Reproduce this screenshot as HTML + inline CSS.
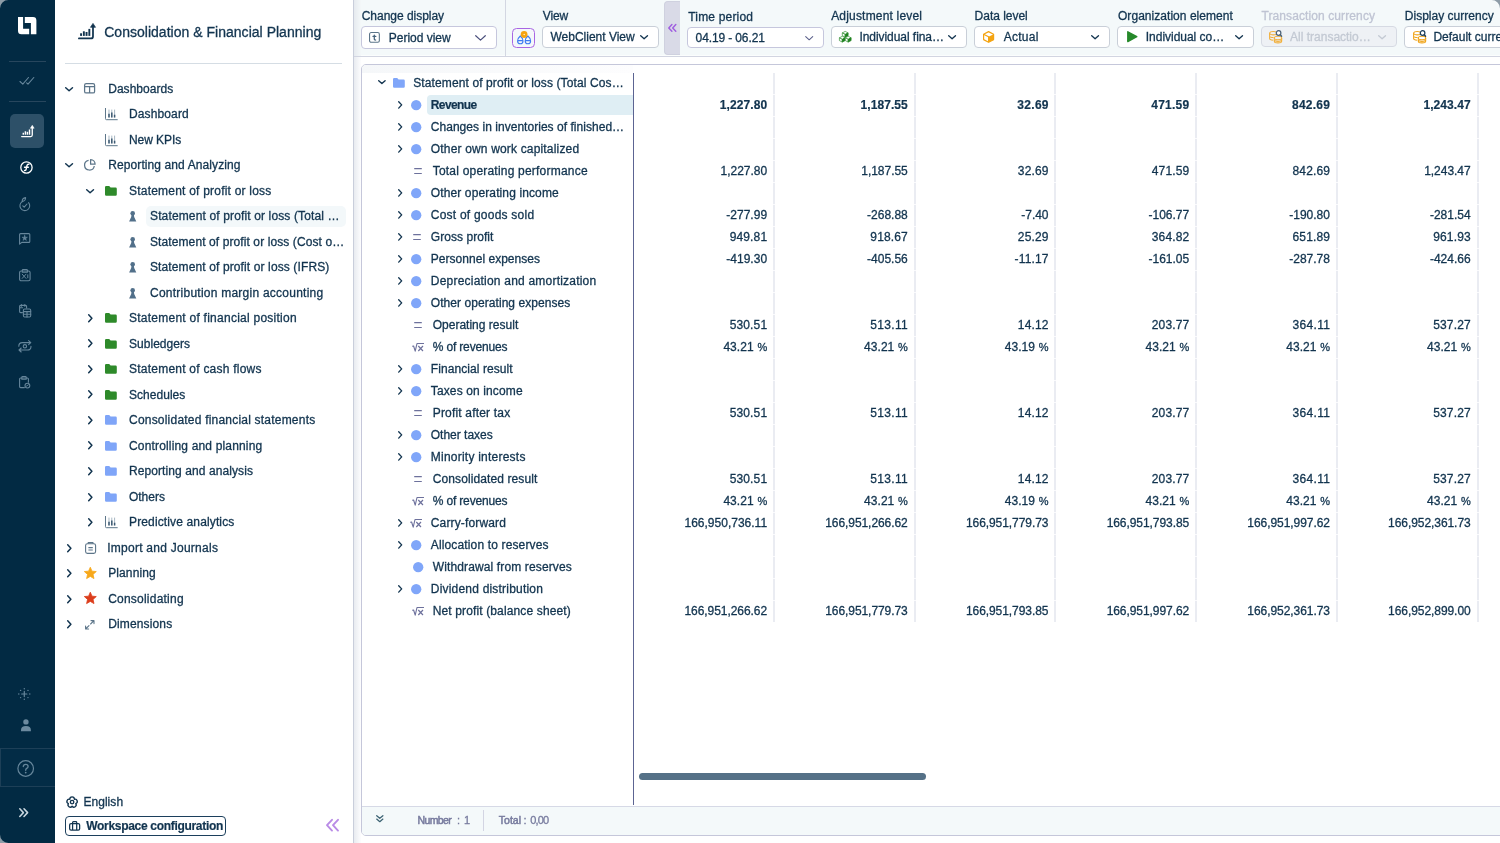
<!DOCTYPE html>
<html lang="en"><head><meta charset="utf-8"><title>Consolidation &amp; Financial Planning</title>
<style>
html,body{margin:0;padding:0}
body{width:1500px;height:843px;overflow:hidden;position:relative;background:#f4f9fa;font-family:"Liberation Sans", sans-serif;color:#12344f}
#root{position:absolute;left:0;top:0;width:1500px;height:843px;overflow:hidden;will-change:transform}
#root div,#root svg,#root span.t{position:absolute}
#root div{box-sizing:border-box}
span.t{white-space:nowrap;line-height:1;font-size:12px;-webkit-text-stroke:0.3px currentColor}
svg{overflow:visible}
</style></head><body><div id="root">
<div style="left:55px;top:0px;width:298px;height:843px;background:#fff"></div>
<div style="left:353px;top:0px;width:1px;height:843px;background:#c9cedb"></div>
<div style="left:354px;top:0px;width:7px;height:843px;background:linear-gradient(90deg,#e6eaef,#f4f8f9)"></div>
<aside class="app-sidebar" aria-label="Modules">
<div style="left:0px;top:0px;width:55px;height:843px;background:#022a43"></div>
<svg style="left:17.8px;top:16.8px" width="18.4" height="17.3" viewBox="0 0 18.4 17.3" ><path fill="#fff" d="M0,0H5.1V11.8H11.2V17.3H3.5Q0,17.3 0,13.8Z"/><path fill="#fff" d="M6.8,0H15Q18.4,0 18.4,3.4V17.3H12.9V5.9H6.8Z"/></svg>
<div style="left:9px;top:61px;width:37px;height:1px;background:#27465d"></div>
<div style="left:9px;top:101px;width:37px;height:1px;background:#27465d"></div>
<svg style="left:19px;top:76px" width="16" height="10" viewBox="0 0 16 10" ><path d="M1,5.5 L3.8,8.2 L9.5,1.5 M7.6,6.8 L9,8.2 L14.8,1.5" fill="none" stroke="#66869b" stroke-width="1.1" stroke-linecap="round" stroke-linejoin="round"/></svg>
<div style="left:10.3px;top:114px;width:34.2px;height:34.2px;background:#2d5068;border-radius:5px"></div>
<svg style="left:21px;top:124.5px" width="13.3" height="12.3" viewBox="0 0 17.7 16.3" ><path d="M0.9,15.4 H13 Q15,15.4 15,13.4 V4.6" fill="none" stroke="#fff" stroke-width="1.75" stroke-linecap="round"/><path d="M15,0.4 L17.5,4.3 H12.5 Z" fill="#fff" stroke="#fff" stroke-width="0.7" stroke-linejoin="round"/><rect x="2.1" y="10.3" width="1.9" height="2.6" fill="#fff"/><rect x="4.9" y="8.3" width="1.9" height="4.6" fill="#fff"/><rect x="7.6" y="9" width="1.9" height="3.9" fill="#fff"/><rect x="10.4" y="5.9" width="1.9" height="7" fill="#fff"/></svg>
<svg style="left:20.1px;top:161.1px" width="12.9" height="12.9" viewBox="0 0 13 13" ><circle cx="6.5" cy="6.5" r="5.7" fill="none" stroke="#fff" stroke-width="1.3"/><path d="M4.6,9.6 Q5.9,9.9 6.2,8.2 L7,4.6 Q7.4,3 8.9,3.3 M4.6,6.3 H8.4" fill="none" stroke="#fff" stroke-width="1.4" stroke-linecap="round"/></svg>
<svg style="left:19px;top:196.5px" width="11.2" height="14.2" viewBox="0 0 11.2 14.2" ><g fill="none" stroke="#66869b" stroke-width="1.1" stroke-linecap="round" stroke-linejoin="round"><path d="M9.6,5.6 A4.9,4.9 0 1 1 3.2,4.6"/><path d="M3.2,4.6 Q3,1.2 6.6,0.6 Q6.8,3.6 3.6,4.4"/><path d="M3.8,8.8 L5.2,10.2 L8,7"/></g></svg>
<svg style="left:19px;top:232.9px" width="11.4" height="12" viewBox="0 0 11.4 12" ><g fill="none" stroke="#66869b" stroke-width="1.1" stroke-linecap="round" stroke-linejoin="round"><path d="M0.6,11.2 V1.6 Q0.6,0.6 1.6,0.6 H9.8 Q10.8,0.6 10.8,1.6 V8.4 Q10.8,9.4 9.8,9.4 H2.8 Z"/><polygon points="5.70,2.20 6.38,4.17 8.46,4.20 6.79,5.46 7.40,7.45 5.70,6.25 4.00,7.45 4.61,5.46 2.94,4.20 5.02,4.17" fill="#66869b" stroke-width="0.5"/></g></svg>
<svg style="left:19.2px;top:269.4px" width="11.7" height="12.4" viewBox="0 0 11.7 12.4" ><g fill="none" stroke="#66869b" stroke-width="1.1" stroke-linecap="round" stroke-linejoin="round"><rect x="0.6" y="2" width="10.5" height="9.8" rx="1.6"/><path d="M3.3,3.3 V1.3 Q3.3,0.5 4.1,0.5 H7.6 Q8.4,0.5 8.4,1.3 V3.3 Z"/><path d="M3.2,5.2 L7,9.4 M7,5.2 L3.2,9.4 M8.8,5.8 V8.8" stroke-width="1"/></g></svg>
<svg style="left:18.6px;top:303.8px" width="12.3" height="13.6" viewBox="0 0 12.3 13.6" ><g fill="none" stroke="#66869b" stroke-width="1.1" stroke-linecap="round" stroke-linejoin="round"><path d="M3.4,8.6 H1.6 Q0.6,8.6 0.6,7.6 V2.4 Q0.6,1.4 1.6,1.4 H6.6 Q7.6,1.4 7.6,2.4 V4 M2.4,0.5 V2.2 M5.8,0.5 V2.2 M0.6,3.8 H3.6"/><rect x="4.4" y="5" width="7.3" height="8" rx="1.2"/><path d="M4.4,7.6 H11.7 M4.4,10.2 H11.7 M8,7.6 V13"/></g></svg>
<svg style="left:18.2px;top:340.3px" width="13.8" height="12.6" viewBox="0 0 13.8 12.6" ><g fill="none" stroke="#66869b" stroke-width="1.1" stroke-linecap="round" stroke-linejoin="round"><path d="M0.8,6.2 Q0.8,2.6 4.4,2.6 H12.6 M10.6,0.6 L12.8,2.6 L10.6,4.6"/><path d="M13,6.4 Q13,10 9.4,10 H1.2 M3.2,8 L1,10 L3.2,12"/><circle cx="6.9" cy="6.3" r="1.7"/></g></svg>
<svg style="left:19.4px;top:375.8px" width="11.4" height="12.4" viewBox="0 0 11.4 12.4" ><g fill="none" stroke="#66869b" stroke-width="1.1" stroke-linecap="round" stroke-linejoin="round"><path d="M5.4,11.6 H1.6 Q0.6,11.6 0.6,10.6 V3 Q0.6,2 1.6,2 H8.4 Q9.4,2 9.4,3 V6.2"/><path d="M2.8,3.3 V1.3 Q2.8,0.5 3.6,0.5 H6.4 Q7.2,0.5 7.2,1.3 V3.3 Z"/><circle cx="8.4" cy="9.6" r="2.4"/><path d="M7.4,10.2 L9.4,8.8" stroke-width="0.9"/></g></svg>
<svg style="left:18.4px;top:687.7px" width="12.6" height="12" viewBox="0 0 12.6 12" ><g fill="#66869b"><path d="M6.3,3.4 V8.6 M3.7,6 H8.9" stroke="#66869b" stroke-width="1.2" stroke-linecap="round"/><circle cx="6.3" cy="0.8" r="0.7"/><circle cx="6.3" cy="11.2" r="0.7"/><circle cx="0.8" cy="6" r="0.7"/><circle cx="11.8" cy="6" r="0.7"/><circle cx="2.6" cy="2.4" r="0.7"/><circle cx="10" cy="2.4" r="0.7"/><circle cx="2.6" cy="9.6" r="0.7"/><circle cx="10" cy="9.6" r="0.7"/></g></svg>
<svg style="left:20.7px;top:718.7px" width="9.9" height="12.2" viewBox="0 0 9.9 12.2" ><circle cx="4.95" cy="2.9" r="2.7" fill="#6c8a9f"/><path d="M0,12.2 V11 Q0,6.9 4.95,6.9 Q9.9,6.9 9.9,11 V12.2 Z" fill="#6c8a9f"/></svg>
<div style="left:0px;top:748px;width:55px;height:38.5px;border-top:1px solid #1d3f57;border-bottom:1px solid #1d3f57;border-left:1px solid #1d3f57;background:#032c46"></div>
<svg style="left:17px;top:759.7px" width="17.4" height="17" viewBox="0 0 17.4 17" ><circle cx="8.7" cy="8.5" r="7.8" fill="none" stroke="#66869b" stroke-width="1.2"/><path d="M6.3,6.6 Q6.3,4.3 8.7,4.3 Q11.1,4.3 11.1,6.4 Q11.1,7.7 9.7,8.4 Q8.7,9 8.7,10.3" fill="none" stroke="#66869b" stroke-width="1.3" stroke-linecap="round"/><circle cx="8.7" cy="12.6" r="0.9" fill="#66869b"/></svg>
<svg style="left:19.3px;top:808px" width="9.2" height="9.3" viewBox="0 0 9.2 9.3" ><path d="M0.8,0.8 L4.4,4.65 L0.8,8.5 M5,0.8 L8.6,4.65 L5,8.5" fill="none" stroke="#c9d6df" stroke-width="1.55" stroke-linecap="round" stroke-linejoin="round"/></svg>
</aside>
<nav class="nav-panel" aria-label="Consolidation and Financial Planning">
<svg style="left:77.8px;top:23.2px" width="17.7" height="16.3" viewBox="0 0 17.7 16.3" ><path d="M0.9,15.4 H13 Q15,15.4 15,13.4 V4.6" fill="none" stroke="#12344f" stroke-width="1.75" stroke-linecap="round"/><path d="M15,0.4 L17.5,4.3 H12.5 Z" fill="#12344f" stroke="#12344f" stroke-width="0.7" stroke-linejoin="round"/><rect x="2.1" y="10.3" width="1.9" height="2.6" fill="#12344f"/><rect x="4.9" y="8.3" width="1.9" height="4.6" fill="#12344f"/><rect x="7.6" y="9" width="1.9" height="3.9" fill="#12344f"/><rect x="10.4" y="5.9" width="1.9" height="7" fill="#12344f"/></svg>
<span id="t0" class="t" style="left:104.20px;top:25px;font-size:14px;letter-spacing:0.022px;">Consolidation &amp; Financial Planning</span>
<div style="left:65px;top:63px;width:277px;height:1px;background:#d5dde4"></div>
<div style="left:146px;top:205.6px;width:200px;height:21.2px;background:#f3f8fa;border-radius:5px"></div>
<svg style="left:64.9px;top:86.55px" width="8.2" height="4.4" viewBox="0 0 8.2 4.4" ><path d="M0.7,0.7 L4.1,3.7 L7.5,0.7" fill="none" stroke="#12344f" stroke-width="1.5" stroke-linecap="round" stroke-linejoin="round"/></svg>
<svg style="left:84.4px;top:83.35px" width="11.2" height="10.6" viewBox="0 0 11.2 10.6" ><g fill="none" stroke="#5c7589" stroke-width="1.25"><rect x="0.6" y="0.6" width="10" height="9.4" rx="1.6"/><path d="M0.6,3.6 H10.6 M5.6,3.6 V10"/></g></svg>
<span id="t1" class="t" style="left:108.20px;top:83px;letter-spacing:0.033px;">Dashboards</span>
<svg style="left:104.9px;top:108.26px" width="12.7" height="12.2" viewBox="0 0 12.7 12.2" ><path d="M0.5,0 V10.7 Q0.5,11.7 1.5,11.7 H12.7" fill="none" stroke="#5c7589" stroke-width="1"/><g stroke="#9fb0bd" stroke-width="0.9"><path d="M4,1.6 V9.4 M6.8,1.6 V9.4 M9.6,1.6 V9.4"/></g><g stroke="#3d5a72" stroke-width="1.5"><path d="M4,5.8 V9.4 M6.8,4.4 V9.4 M9.6,6.8 V9.4"/></g></svg>
<span id="t2" class="t" style="left:129.00px;top:108px;letter-spacing:0.121px;">Dashboard</span>
<svg style="left:104.9px;top:133.77px" width="12.7" height="12.2" viewBox="0 0 12.7 12.2" ><path d="M0.5,0 V10.7 Q0.5,11.7 1.5,11.7 H12.7" fill="none" stroke="#5c7589" stroke-width="1"/><g stroke="#9fb0bd" stroke-width="0.9"><path d="M4,1.6 V9.4 M6.8,1.6 V9.4 M9.6,1.6 V9.4"/></g><g stroke="#3d5a72" stroke-width="1.5"><path d="M4,5.8 V9.4 M6.8,4.4 V9.4 M9.6,6.8 V9.4"/></g></svg>
<span id="t3" class="t" style="left:129.00px;top:134px;letter-spacing:-0.055px;">New KPIs</span>
<svg style="left:64.9px;top:163.08px" width="8.2" height="4.4" viewBox="0 0 8.2 4.4" ><path d="M0.7,0.7 L4.1,3.7 L7.5,0.7" fill="none" stroke="#12344f" stroke-width="1.5" stroke-linecap="round" stroke-linejoin="round"/></svg>
<svg style="left:84.2px;top:159.48px" width="11.7" height="11.4" viewBox="0 0 11.7 11.4" ><g fill="none" stroke="#5c7589" stroke-width="1.25"><path d="M4.6,1.3 A4.9,4.9 0 1 0 10.3,7"/><path d="M6.6,0.6 V5.2 H11.1 A4.6,4.6 0 0 0 6.6,0.6 Z" stroke-linejoin="round"/></g></svg>
<span id="t4" class="t" style="left:108.20px;top:159px;letter-spacing:0.101px;">Reporting and Analyzing</span>
<svg style="left:85.9px;top:188.59px" width="8.2" height="4.4" viewBox="0 0 8.2 4.4" ><path d="M0.7,0.7 L4.1,3.7 L7.5,0.7" fill="none" stroke="#12344f" stroke-width="1.5" stroke-linecap="round" stroke-linejoin="round"/></svg>
<svg style="left:105.3px;top:185.79px" width="11.8" height="9.8" viewBox="0 0 11.8 9.8" ><path d="M0,1.2 Q0,0 1.2,0 H4.2 L5.6,1.5 H10.6 Q11.8,1.5 11.8,2.7 V8.6 Q11.8,9.8 10.6,9.8 H1.2 Q0,9.8 0,8.6 Z" fill="#2e8a2a"/></svg>
<span id="t5" class="t" style="left:129.00px;top:185px;letter-spacing:0.214px;">Statement of profit or loss</span>
<svg style="left:128.7px;top:211px" width="7.4" height="10.6" viewBox="0 0 7.4 10.6" ><circle cx="3.7" cy="2.3" r="2.3" fill="#52708a"/><path d="M2.5,3.8 H4.9 L5.2,6 L7.3,10.6 H0.1 L2.2,6 Z" fill="#52708a"/></svg>
<span id="t6" class="t" style="left:150.00px;top:210px;letter-spacing:0.139px;">Statement of profit or loss (Total …</span>
<svg style="left:128.7px;top:236.51px" width="7.4" height="10.6" viewBox="0 0 7.4 10.6" ><circle cx="3.7" cy="2.3" r="2.3" fill="#52708a"/><path d="M2.5,3.8 H4.9 L5.2,6 L7.3,10.6 H0.1 L2.2,6 Z" fill="#52708a"/></svg>
<span id="t7" class="t" style="left:150.00px;top:236px;letter-spacing:0.099px;">Statement of profit or loss (Cost o…</span>
<svg style="left:128.7px;top:262.02px" width="7.4" height="10.6" viewBox="0 0 7.4 10.6" ><circle cx="3.7" cy="2.3" r="2.3" fill="#52708a"/><path d="M2.5,3.8 H4.9 L5.2,6 L7.3,10.6 H0.1 L2.2,6 Z" fill="#52708a"/></svg>
<span id="t8" class="t" style="left:150.00px;top:261px;letter-spacing:0.118px;">Statement of profit or loss (IFRS)</span>
<svg style="left:128.7px;top:287.53px" width="7.4" height="10.6" viewBox="0 0 7.4 10.6" ><circle cx="3.7" cy="2.3" r="2.3" fill="#52708a"/><path d="M2.5,3.8 H4.9 L5.2,6 L7.3,10.6 H0.1 L2.2,6 Z" fill="#52708a"/></svg>
<span id="t9" class="t" style="left:150.00px;top:287px;letter-spacing:0.244px;">Contribution margin accounting</span>
<svg style="left:87.7px;top:313.94px" width="4.6" height="8.4" viewBox="0 0 4.6 8.4" ><path d="M0.7,0.7 L3.9,4.2 L0.7,7.7" fill="none" stroke="#12344f" stroke-width="1.5" stroke-linecap="round" stroke-linejoin="round"/></svg>
<svg style="left:105.3px;top:313.34px" width="11.8" height="9.8" viewBox="0 0 11.8 9.8" ><path d="M0,1.2 Q0,0 1.2,0 H4.2 L5.6,1.5 H10.6 Q11.8,1.5 11.8,2.7 V8.6 Q11.8,9.8 10.6,9.8 H1.2 Q0,9.8 0,8.6 Z" fill="#2e8a2a"/></svg>
<span id="t10" class="t" style="left:129.00px;top:312px;letter-spacing:0.249px;">Statement of financial position</span>
<svg style="left:87.7px;top:339.45px" width="4.6" height="8.4" viewBox="0 0 4.6 8.4" ><path d="M0.7,0.7 L3.9,4.2 L0.7,7.7" fill="none" stroke="#12344f" stroke-width="1.5" stroke-linecap="round" stroke-linejoin="round"/></svg>
<svg style="left:105.3px;top:338.85px" width="11.8" height="9.8" viewBox="0 0 11.8 9.8" ><path d="M0,1.2 Q0,0 1.2,0 H4.2 L5.6,1.5 H10.6 Q11.8,1.5 11.8,2.7 V8.6 Q11.8,9.8 10.6,9.8 H1.2 Q0,9.8 0,8.6 Z" fill="#2e8a2a"/></svg>
<span id="t11" class="t" style="left:129.00px;top:338px;letter-spacing:0.032px;">Subledgers</span>
<svg style="left:87.7px;top:364.96px" width="4.6" height="8.4" viewBox="0 0 4.6 8.4" ><path d="M0.7,0.7 L3.9,4.2 L0.7,7.7" fill="none" stroke="#12344f" stroke-width="1.5" stroke-linecap="round" stroke-linejoin="round"/></svg>
<svg style="left:105.3px;top:364.36px" width="11.8" height="9.8" viewBox="0 0 11.8 9.8" ><path d="M0,1.2 Q0,0 1.2,0 H4.2 L5.6,1.5 H10.6 Q11.8,1.5 11.8,2.7 V8.6 Q11.8,9.8 10.6,9.8 H1.2 Q0,9.8 0,8.6 Z" fill="#2e8a2a"/></svg>
<span id="t12" class="t" style="left:129.00px;top:363px;letter-spacing:0.232px;">Statement of cash flows</span>
<svg style="left:87.7px;top:390.47px" width="4.6" height="8.4" viewBox="0 0 4.6 8.4" ><path d="M0.7,0.7 L3.9,4.2 L0.7,7.7" fill="none" stroke="#12344f" stroke-width="1.5" stroke-linecap="round" stroke-linejoin="round"/></svg>
<svg style="left:105.3px;top:389.87px" width="11.8" height="9.8" viewBox="0 0 11.8 9.8" ><path d="M0,1.2 Q0,0 1.2,0 H4.2 L5.6,1.5 H10.6 Q11.8,1.5 11.8,2.7 V8.6 Q11.8,9.8 10.6,9.8 H1.2 Q0,9.8 0,8.6 Z" fill="#2e8a2a"/></svg>
<span id="t13" class="t" style="left:129.00px;top:389px;letter-spacing:0.033px;">Schedules</span>
<svg style="left:87.7px;top:415.98px" width="4.6" height="8.4" viewBox="0 0 4.6 8.4" ><path d="M0.7,0.7 L3.9,4.2 L0.7,7.7" fill="none" stroke="#12344f" stroke-width="1.5" stroke-linecap="round" stroke-linejoin="round"/></svg>
<svg style="left:105.3px;top:415.38px" width="11.8" height="9.8" viewBox="0 0 11.8 9.8" ><path d="M0,1.2 Q0,0 1.2,0 H4.2 L5.6,1.5 H10.6 Q11.8,1.5 11.8,2.7 V8.6 Q11.8,9.8 10.6,9.8 H1.2 Q0,9.8 0,8.6 Z" fill="#7fa5f8"/></svg>
<span id="t14" class="t" style="left:129.00px;top:414px;letter-spacing:0.211px;">Consolidated financial statements</span>
<svg style="left:87.7px;top:441.49px" width="4.6" height="8.4" viewBox="0 0 4.6 8.4" ><path d="M0.7,0.7 L3.9,4.2 L0.7,7.7" fill="none" stroke="#12344f" stroke-width="1.5" stroke-linecap="round" stroke-linejoin="round"/></svg>
<svg style="left:105.3px;top:440.89px" width="11.8" height="9.8" viewBox="0 0 11.8 9.8" ><path d="M0,1.2 Q0,0 1.2,0 H4.2 L5.6,1.5 H10.6 Q11.8,1.5 11.8,2.7 V8.6 Q11.8,9.8 10.6,9.8 H1.2 Q0,9.8 0,8.6 Z" fill="#7fa5f8"/></svg>
<span id="t15" class="t" style="left:129.00px;top:440px;letter-spacing:0.163px;">Controlling and planning</span>
<svg style="left:87.7px;top:467px" width="4.6" height="8.4" viewBox="0 0 4.6 8.4" ><path d="M0.7,0.7 L3.9,4.2 L0.7,7.7" fill="none" stroke="#12344f" stroke-width="1.5" stroke-linecap="round" stroke-linejoin="round"/></svg>
<svg style="left:105.3px;top:466.4px" width="11.8" height="9.8" viewBox="0 0 11.8 9.8" ><path d="M0,1.2 Q0,0 1.2,0 H4.2 L5.6,1.5 H10.6 Q11.8,1.5 11.8,2.7 V8.6 Q11.8,9.8 10.6,9.8 H1.2 Q0,9.8 0,8.6 Z" fill="#7fa5f8"/></svg>
<span id="t16" class="t" style="left:129.00px;top:465px;letter-spacing:0.087px;">Reporting and analysis</span>
<svg style="left:87.7px;top:492.51px" width="4.6" height="8.4" viewBox="0 0 4.6 8.4" ><path d="M0.7,0.7 L3.9,4.2 L0.7,7.7" fill="none" stroke="#12344f" stroke-width="1.5" stroke-linecap="round" stroke-linejoin="round"/></svg>
<svg style="left:105.3px;top:491.91px" width="11.8" height="9.8" viewBox="0 0 11.8 9.8" ><path d="M0,1.2 Q0,0 1.2,0 H4.2 L5.6,1.5 H10.6 Q11.8,1.5 11.8,2.7 V8.6 Q11.8,9.8 10.6,9.8 H1.2 Q0,9.8 0,8.6 Z" fill="#7fa5f8"/></svg>
<span id="t17" class="t" style="left:129.00px;top:491px;letter-spacing:-0.022px;">Others</span>
<svg style="left:87.7px;top:518.02px" width="4.6" height="8.4" viewBox="0 0 4.6 8.4" ><path d="M0.7,0.7 L3.9,4.2 L0.7,7.7" fill="none" stroke="#12344f" stroke-width="1.5" stroke-linecap="round" stroke-linejoin="round"/></svg>
<svg style="left:104.9px;top:516.42px" width="12.7" height="12.2" viewBox="0 0 12.7 12.2" ><path d="M0.5,0 V10.7 Q0.5,11.7 1.5,11.7 H12.7" fill="none" stroke="#5c7589" stroke-width="1"/><g stroke="#9fb0bd" stroke-width="0.9"><path d="M4,1.6 V9.4 M6.8,1.6 V9.4 M9.6,1.6 V9.4"/></g><g stroke="#3d5a72" stroke-width="1.5"><path d="M4,5.8 V9.4 M6.8,4.4 V9.4 M9.6,6.8 V9.4"/></g></svg>
<span id="t18" class="t" style="left:129.00px;top:516px;letter-spacing:0.136px;">Predictive analytics</span>
<svg style="left:66.5px;top:543.53px" width="4.6" height="8.4" viewBox="0 0 4.6 8.4" ><path d="M0.7,0.7 L3.9,4.2 L0.7,7.7" fill="none" stroke="#12344f" stroke-width="1.5" stroke-linecap="round" stroke-linejoin="round"/></svg>
<svg style="left:85.1px;top:541.73px" width="11.2" height="12" viewBox="0 0 11.2 12" ><g fill="none" stroke="#5c7589" stroke-width="1.1" stroke-linejoin="round"><rect x="0.6" y="1.8" width="10" height="9.6" rx="1.8"/><path d="M3.2,1.8 V0.6 H8 V1.8 M3.4,5.6 H7.8 M3.4,8 H7.8"/></g></svg>
<span id="t19" class="t" style="left:107.20px;top:542px;letter-spacing:0.258px;">Import and Journals</span>
<svg style="left:66.5px;top:569.04px" width="4.6" height="8.4" viewBox="0 0 4.6 8.4" ><path d="M0.7,0.7 L3.9,4.2 L0.7,7.7" fill="none" stroke="#12344f" stroke-width="1.5" stroke-linecap="round" stroke-linejoin="round"/></svg>
<svg style="left:83.7px;top:566.74px" width="12.6" height="12.6" viewBox="0 0 12.6 12.6" ><polygon points="6.30,0.20 8.00,4.15 12.29,4.55 9.06,7.40 10.00,11.60 6.30,9.40 2.60,11.60 3.54,7.40 0.31,4.55 4.60,4.15" fill="#f7a81b" stroke="#f7a81b" stroke-width="0.8" stroke-linejoin="round"/></svg>
<span id="t20" class="t" style="left:108.20px;top:567px;letter-spacing:0.110px;">Planning</span>
<svg style="left:66.5px;top:594.55px" width="4.6" height="8.4" viewBox="0 0 4.6 8.4" ><path d="M0.7,0.7 L3.9,4.2 L0.7,7.7" fill="none" stroke="#12344f" stroke-width="1.5" stroke-linecap="round" stroke-linejoin="round"/></svg>
<svg style="left:83.7px;top:592.25px" width="12.6" height="12.6" viewBox="0 0 12.6 12.6" ><polygon points="6.30,0.20 8.00,4.15 12.29,4.55 9.06,7.40 10.00,11.60 6.30,9.40 2.60,11.60 3.54,7.40 0.31,4.55 4.60,4.15" fill="#dc3d1c" stroke="#dc3d1c" stroke-width="0.8" stroke-linejoin="round"/></svg>
<span id="t21" class="t" style="left:108.20px;top:593px;letter-spacing:0.222px;">Consolidating</span>
<svg style="left:66.5px;top:620.06px" width="4.6" height="8.4" viewBox="0 0 4.6 8.4" ><path d="M0.7,0.7 L3.9,4.2 L0.7,7.7" fill="none" stroke="#12344f" stroke-width="1.5" stroke-linecap="round" stroke-linejoin="round"/></svg>
<svg style="left:85.2px;top:619.66px" width="9.6" height="9.6" viewBox="0 0 9.6 9.6" ><g fill="none" stroke="#5c7589" stroke-width="1.1" stroke-linecap="round" stroke-linejoin="round"><path d="M5.6,4 L9,0.6 M6,0.6 H9 V3.6 M4,5.6 L0.6,9 M0.6,6 V9 H3.6"/></g></svg>
<span id="t22" class="t" style="left:108.20px;top:618px;letter-spacing:0.146px;">Dimensions</span>
<svg style="left:66.3px;top:795.8px" width="12.2" height="12.2" viewBox="0 0 12.2 12.2" ><g fill="none" stroke="#12344f" stroke-width="1.35" stroke-linejoin="round"><path d="M3.80,3.24 A2.3,2.3 0 0 1 8.40,3.24 A2.3,2.3 0 0 1 9.81,7.61 A2.3,2.3 0 0 1 6.10,10.31 A2.3,2.3 0 0 1 2.39,7.61 A2.3,2.3 0 0 1 3.80,3.24 Z"/><circle cx="6.1" cy="6.1" r="1.75"/></g></svg>
<span id="t23" class="t" style="left:83.40px;top:796px;letter-spacing:0.053px;">English</span>
<div style="left:65.4px;top:816.2px;width:160.4px;height:19.4px;border:1px solid #1c3f5c;border-radius:4px;background:#fff"></div>
<svg style="left:69.4px;top:821.3px" width="11.3" height="9.8" viewBox="0 0 11.3 9.8" ><g fill="none" stroke="#12344f" stroke-width="1.25" stroke-linejoin="round"><rect x="0.65" y="2.6" width="10" height="6.5" rx="1.4"/><path d="M3.6,9 V1.4 Q3.6,0.65 4.4,0.65 H6.9 Q7.7,0.65 7.7,1.4 V9"/></g></svg>
<span id="t24" class="t" style="left:86.20px;top:820px;font-weight:700;-webkit-text-stroke-width:0.2px;letter-spacing:-0.303px;">Workspace configuration</span>
<svg style="left:325.8px;top:818.8px" width="13" height="12.4" viewBox="0 0 13 12.4" ><path d="M6,0.8 L1,6.2 L6,11.6 M12,0.8 L7,6.2 L12,11.6" fill="none" stroke="#b98be6" stroke-width="1.9" stroke-linecap="round" stroke-linejoin="round"/></svg>
</nav>
<header class="filter-toolbar">
<div style="left:361px;top:55px;width:1139px;height:1px;background:#fbfdfd"></div>
<div style="left:354px;top:56px;width:1146px;height:1px;background:#d2d5e1"></div>
<div style="left:354px;top:57px;width:1146px;height:786px;background:#fff"></div>
<div style="left:354px;top:57px;width:7px;height:786px;background:linear-gradient(90deg,#e8ebf0,#fdfdfe)"></div>
<div style="left:505px;top:0px;width:1px;height:56px;background:#d3d7e2"></div>
<span id="t25" class="t" style="left:361.70px;top:10px;letter-spacing:-0.025px;">Change display</span>
<div style="left:361px;top:26px;width:136.3px;height:23px;background:#fff;border:1px solid #c6c7dd;border-radius:4px"></div>
<svg style="left:369px;top:32.2px" width="10.9" height="10.8" viewBox="0 0 10.9 10.8" ><rect x="0.55" y="0.55" width="9.8" height="9.7" rx="1.6" fill="none" stroke="#5c7589" stroke-width="1.1"/><path d="M5.3,3 V7 Q5.3,8.2 6.6,8 M4,4.4 H6.8" fill="none" stroke="#46627a" stroke-width="1.25" stroke-linecap="round"/></svg>
<span id="t26" class="t" style="left:388.80px;top:32px;letter-spacing:-0.016px;">Period view</span>
<svg style="left:475.1px;top:35px" width="11" height="5.8" viewBox="0 0 11 5.8" ><path d="M0.7,0.7 L5.5,5.1 L10.3,0.7" fill="none" stroke="#4a4f7c" stroke-width="1.2" stroke-linecap="round" stroke-linejoin="round"/></svg>
<div style="left:512.2px;top:27.9px;width:23.1px;height:20.6px;background:#f5f8fa;border:1.3px solid #a866e3;border-radius:4.5px"></div>
<svg style="left:516.6px;top:31px" width="14.4" height="13.4" viewBox="0 0 14.4 13.4" ><g fill="none" stroke="#3f7cf2" stroke-width="1.15"><path d="M3.3,5 Q0.6,7.2 0.6,10 Q0.6,12.8 3.3,12.8 Q6,12.8 6,10 Q6,7.2 3.3,5 Z M0.7,9.6 H5.9"/><path d="M10.9,5 Q8.2,7.2 8.2,10 Q8.2,12.8 10.9,12.8 Q13.6,12.8 13.6,10 Q13.6,7.2 10.9,5 Z M8.3,9.6 H13.5"/></g><circle cx="7.1" cy="3.5" r="3.4" fill="#f7a410"/><path d="M5.6,3.5 L8,2.7 V4.3 Z" fill="#fde3b0"/></svg>
<span id="t27" class="t" style="left:542.80px;top:10px;letter-spacing:-0.176px;">View</span>
<div style="left:542px;top:26px;width:117.2px;height:21.5px;background:#fff;border:1px solid #c9cfd8;border-radius:4px"></div>
<span id="t28" class="t" style="left:550.50px;top:31px;letter-spacing:-0.008px;">WebClient View</span>
<svg style="left:640px;top:34.6px" width="8.2" height="4.4" viewBox="0 0 8.2 4.4" ><path d="M0.7,0.7 L4.1,3.7 L7.5,0.7" fill="none" stroke="#12344f" stroke-width="1.35" stroke-linecap="round" stroke-linejoin="round"/></svg>
<div style="left:664.4px;top:1.3px;width:15.8px;height:53.9px;background:#d9dae7;border:1px solid #cfd1df;border-right:none;border-radius:4px 0 0 4px"></div>
<svg style="left:667.8px;top:24px" width="8.6" height="7.8" viewBox="0 0 8.6 7.8" ><path d="M3.9,0.6 L0.8,3.9 L3.9,7.2 M7.8,0.6 L4.7,3.9 L7.8,7.2" fill="none" stroke="#a05fe0" stroke-width="1.5" stroke-linecap="round" stroke-linejoin="round"/></svg>
<span id="t29" class="t" style="left:688.30px;top:11px;letter-spacing:0.176px;">Time period</span>
<div style="left:687px;top:27px;width:136.6px;height:21.3px;background:#fff;border:1px solid #c6c7dd;border-radius:4px"></div>
<span id="t30" class="t" style="left:695.60px;top:32px;letter-spacing:-0.121px;">04.19 - 06.21</span>
<svg style="left:805.3px;top:36.05px" width="8.4" height="4.5" viewBox="0 0 8.4 4.5" ><path d="M0.7,0.7 L4.2,3.8 L7.7,0.7" fill="none" stroke="#5a5f8a" stroke-width="1.1" stroke-linecap="round" stroke-linejoin="round"/></svg>
<span id="t31" class="t" style="left:831.20px;top:10px;letter-spacing:0.182px;">Adjustment level</span>
<div style="left:830.6px;top:26px;width:136.3px;height:21.5px;background:#fff;border:1px solid #c9cfd8;border-radius:4px"></div>
<svg style="left:839.3px;top:30.6px" width="12.6" height="11.5" viewBox="0 0 12.6 11.5" ><path d="M6.2,0.4 L9.1,1.908 L6.2,3.416 L3.3,1.908 Z" fill="#fff" stroke="#2f8f2f" stroke-width="0.7" stroke-linejoin="round"/><path d="M3.3,1.908 L6.2,3.416 L6.2,6.2 L3.3,4.692 Z" fill="#fff" stroke="#2f8f2f" stroke-width="0.7" stroke-linejoin="round"/><path d="M9.1,1.908 L6.2,3.416 L6.2,6.2 L9.1,4.692 Z" fill="#1d801d" stroke="#1d801d" stroke-width="0.7" stroke-linejoin="round"/><path d="M3.3,5.3 L6.2,6.808 L3.3,8.316 L0.4,6.808 Z" fill="#fff" stroke="#2f8f2f" stroke-width="0.7" stroke-linejoin="round"/><path d="M0.4,6.808 L3.3,8.316 L3.3,11.1 L0.4,9.592 Z" fill="#fff" stroke="#2f8f2f" stroke-width="0.7" stroke-linejoin="round"/><path d="M6.2,6.808 L3.3,8.316 L3.3,11.1 L6.2,9.592 Z" fill="#1d801d" stroke="#1d801d" stroke-width="0.7" stroke-linejoin="round"/><path d="M9.2,5.3 L12.1,6.808 L9.2,8.316 L6.3,6.808 Z" fill="#fff" stroke="#2f8f2f" stroke-width="0.7" stroke-linejoin="round"/><path d="M6.3,6.808 L9.2,8.316 L9.2,11.1 L6.3,9.592 Z" fill="#fff" stroke="#2f8f2f" stroke-width="0.7" stroke-linejoin="round"/><path d="M12.1,6.808 L9.2,8.316 L9.2,11.1 L12.1,9.592 Z" fill="#1d801d" stroke="#1d801d" stroke-width="0.7" stroke-linejoin="round"/></svg>
<span id="t32" class="t" style="left:859.40px;top:31px;letter-spacing:-0.052px;">Individual fina…</span>
<svg style="left:948.1px;top:34.6px" width="8.2" height="4.4" viewBox="0 0 8.2 4.4" ><path d="M0.7,0.7 L4.1,3.7 L7.5,0.7" fill="none" stroke="#12344f" stroke-width="1.35" stroke-linecap="round" stroke-linejoin="round"/></svg>
<span id="t33" class="t" style="left:974.60px;top:10px;letter-spacing:-0.022px;">Data level</span>
<div style="left:974px;top:26px;width:136px;height:21.5px;background:#fff;border:1px solid #c9cfd8;border-radius:4px"></div>
<svg style="left:983.1px;top:31.1px" width="11.2" height="11.8" viewBox="0 0 11.2 11.8" ><path d="M5.6,0.6 L10.6,3.2 V8.6 L5.6,11.2 L0.6,8.6 V3.2 Z" fill="#fff" stroke="#f4a412" stroke-width="1.2" stroke-linejoin="round"/><path d="M5.6,5.8 L10.6,3.2 V8.6 L5.6,11.2 Z" fill="#f4a412"/><path d="M0.6,3.2 L5.6,5.8 V11.2" fill="none" stroke="#f4a412" stroke-width="1.2" stroke-linejoin="round"/></svg>
<span id="t34" class="t" style="left:1003.70px;top:31px;letter-spacing:0.283px;">Actual</span>
<svg style="left:1091.4px;top:34.6px" width="8.2" height="4.4" viewBox="0 0 8.2 4.4" ><path d="M0.7,0.7 L4.1,3.7 L7.5,0.7" fill="none" stroke="#12344f" stroke-width="1.35" stroke-linecap="round" stroke-linejoin="round"/></svg>
<span id="t35" class="t" style="left:1118.00px;top:10px;letter-spacing:0.041px;">Organization element</span>
<div style="left:1117.4px;top:26px;width:136.2px;height:21.5px;background:#fff;border:1px solid #c9cfd8;border-radius:4px"></div>
<svg style="left:1127.1px;top:31.4px" width="10.6" height="11.4" viewBox="0 0 10.6 11.4" ><path d="M0.8,0.8 L9.8,5.7 L0.8,10.6 Z" fill="#26892a" stroke="#26892a" stroke-width="1.4" stroke-linejoin="round"/></svg>
<span id="t36" class="t" style="left:1145.80px;top:31px;letter-spacing:-0.024px;">Individual co…</span>
<svg style="left:1234.8px;top:34.6px" width="8.2" height="4.4" viewBox="0 0 8.2 4.4" ><path d="M0.7,0.7 L4.1,3.7 L7.5,0.7" fill="none" stroke="#12344f" stroke-width="1.35" stroke-linecap="round" stroke-linejoin="round"/></svg>
<span id="t37" class="t" style="left:1261.40px;top:10px;color:#bfc4d3;letter-spacing:0.105px;">Transaction currency</span>
<div style="left:1260.6px;top:26.3px;width:136.3px;height:21.2px;background:#eef1f5;border:1px solid #d6dae3;border-radius:4px"></div>
<svg style="left:1269px;top:29.8px" width="13.4" height="13.4" viewBox="0 0 13.4 13.4" ><g fill="none" stroke="#f2b03c" stroke-width="1.05"><ellipse cx="4.2" cy="3.2" rx="3.6" ry="1.7"/><path d="M0.6,3.2 V8.6 Q0.6,10.2 4.2,10.3 M0.6,5.9 Q0.6,7.5 4.6,7.6"/><ellipse cx="9" cy="8" rx="3.7" ry="1.7"/><path d="M5.3,8 V11.2 Q5.3,12.9 9,12.9 Q12.7,12.9 12.7,11.2 V8 M5.3,9.8 Q5.3,11.4 9,11.4 Q12.7,11.4 12.7,9.8"/></g><circle cx="9.6" cy="3" r="2.3" fill="#fff" stroke="#4a6076" stroke-width="1.2"/><path d="M11.3,4.8 L12.6,6.2" stroke="#4a6076" stroke-width="1.4" stroke-linecap="round"/></svg>
<span id="t38" class="t" style="left:1290.10px;top:31px;color:#c3c9d3;letter-spacing:-0.007px;">All transactio…</span>
<svg style="left:1378.1px;top:34.6px" width="8.2" height="4.4" viewBox="0 0 8.2 4.4" ><path d="M0.7,0.7 L4.1,3.7 L7.5,0.7" fill="none" stroke="#c3c9d3" stroke-width="1.35" stroke-linecap="round" stroke-linejoin="round"/></svg>
<span id="t39" class="t" style="left:1404.80px;top:10px;letter-spacing:0.014px;">Display currency</span>
<div style="left:1404.2px;top:26px;width:136.3px;height:21.5px;background:#fff;border:1px solid #c9cfd8;border-radius:4px"></div>
<svg style="left:1412.5px;top:29.8px" width="13.4" height="13.4" viewBox="0 0 13.4 13.4" ><g fill="none" stroke="#f0a51c" stroke-width="1.05"><ellipse cx="4.2" cy="3.2" rx="3.6" ry="1.7"/><path d="M0.6,3.2 V8.6 Q0.6,10.2 4.2,10.3 M0.6,5.9 Q0.6,7.5 4.6,7.6"/><ellipse cx="9" cy="8" rx="3.7" ry="1.7"/><path d="M5.3,8 V11.2 Q5.3,12.9 9,12.9 Q12.7,12.9 12.7,11.2 V8 M5.3,9.8 Q5.3,11.4 9,11.4 Q12.7,11.4 12.7,9.8"/></g><circle cx="9.6" cy="3" r="2.3" fill="#fff" stroke="#1d3f5c" stroke-width="1.2"/><path d="M11.3,4.8 L12.6,6.2" stroke="#1d3f5c" stroke-width="1.4" stroke-linecap="round"/></svg>
<span id="t40" class="t" style="left:1433.40px;top:31px;">Default currency</span>
</header>
<main class="report-grid">
<div style="left:361px;top:64px;width:1160px;height:772px;background:#fff;border:1px solid #c5c7da;border-radius:5px"></div>
<div style="left:362px;top:65px;width:271px;height:8px;background:linear-gradient(90deg,#f5f7f9,#fdfdfe);border-radius:4px 0 0 0"></div>
<div style="left:362px;top:806px;width:1150px;height:29px;background:#f4f9fa;border-top:1px solid #d6d9e6;border-radius:0 0 0 4px"></div>
<svg style="left:375.8px;top:815px" width="7.6" height="7.6" viewBox="0 0 7.6 7.6" ><path d="M0.7,0.7 L3.8,3.3 L6.9,0.7 M0.7,4.1 L3.8,6.7 L6.9,4.1" fill="none" stroke="#3b6272" stroke-width="1.25" stroke-linecap="round" stroke-linejoin="round"/></svg>
<span id="t41" class="t" style="left:417.60px;top:814.75px;font-size:10.5px;color:#777b9e;letter-spacing:-0.630px;-webkit-text-stroke-width:0.5px;">Number</span>
<span id="t42" class="t" style="left:456.90px;top:814.5px;font-size:11px;color:#777b9e;">:</span>
<span id="t43" class="t" style="left:464.00px;top:814.5px;font-size:11px;color:#777b9e;">1</span>
<div style="left:483px;top:810px;width:1px;height:20.5px;background:#d3d5e3"></div>
<span id="t44" class="t" style="left:498.80px;top:814.75px;font-size:10.5px;color:#777b9e;letter-spacing:0.013px;-webkit-text-stroke-width:0.5px;">Total</span>
<span id="t45" class="t" style="left:523.60px;top:814.5px;font-size:11px;color:#777b9e;">:</span>
<span id="t46" class="t" style="left:530.20px;top:814.5px;font-size:11px;color:#777b9e;letter-spacing:-0.831px;">0,00</span>
<div style="left:633px;top:73px;width:1.4px;height:732px;background:#5c6492"></div>
<div style="left:639.2px;top:772.5px;width:287.2px;height:7.2px;background:#557187;border-radius:3.6px"></div>
<div style="left:427px;top:94.6px;width:206px;height:20.2px;background:#dfeef4;border-radius:4px 0 0 4px"></div>
<div style="left:773px;top:73px;width:2px;height:549px;background:#eaecf2"></div>
<div style="left:913.7px;top:73px;width:2px;height:549px;background:#eaecf2"></div>
<div style="left:1054.4px;top:73px;width:2px;height:549px;background:#eaecf2"></div>
<div style="left:1195.2px;top:73px;width:2px;height:549px;background:#eaecf2"></div>
<div style="left:1335.9px;top:73px;width:2px;height:549px;background:#eaecf2"></div>
<div style="left:1476.6px;top:73px;width:2px;height:549px;background:#eaecf2"></div>
<div style="left:640px;top:93.9px;width:860px;height:0.8px;background:rgba(255,255,255,0.8)"></div>
<div style="left:640px;top:115.9px;width:860px;height:0.8px;background:rgba(255,255,255,0.8)"></div>
<div style="left:640px;top:137.9px;width:860px;height:0.8px;background:rgba(255,255,255,0.8)"></div>
<div style="left:640px;top:159.9px;width:860px;height:0.8px;background:rgba(255,255,255,0.8)"></div>
<div style="left:640px;top:181.9px;width:860px;height:0.8px;background:rgba(255,255,255,0.8)"></div>
<div style="left:640px;top:203.9px;width:860px;height:0.8px;background:rgba(255,255,255,0.8)"></div>
<div style="left:640px;top:225.9px;width:860px;height:0.8px;background:rgba(255,255,255,0.8)"></div>
<div style="left:640px;top:247.9px;width:860px;height:0.8px;background:rgba(255,255,255,0.8)"></div>
<div style="left:640px;top:269.9px;width:860px;height:0.8px;background:rgba(255,255,255,0.8)"></div>
<div style="left:640px;top:291.9px;width:860px;height:0.8px;background:rgba(255,255,255,0.8)"></div>
<div style="left:640px;top:313.9px;width:860px;height:0.8px;background:rgba(255,255,255,0.8)"></div>
<div style="left:640px;top:335.9px;width:860px;height:0.8px;background:rgba(255,255,255,0.8)"></div>
<div style="left:640px;top:357.9px;width:860px;height:0.8px;background:rgba(255,255,255,0.8)"></div>
<div style="left:640px;top:379.9px;width:860px;height:0.8px;background:rgba(255,255,255,0.8)"></div>
<div style="left:640px;top:401.9px;width:860px;height:0.8px;background:rgba(255,255,255,0.8)"></div>
<div style="left:640px;top:423.9px;width:860px;height:0.8px;background:rgba(255,255,255,0.8)"></div>
<div style="left:640px;top:445.9px;width:860px;height:0.8px;background:rgba(255,255,255,0.8)"></div>
<div style="left:640px;top:467.9px;width:860px;height:0.8px;background:rgba(255,255,255,0.8)"></div>
<div style="left:640px;top:489.9px;width:860px;height:0.8px;background:rgba(255,255,255,0.8)"></div>
<div style="left:640px;top:511.9px;width:860px;height:0.8px;background:rgba(255,255,255,0.8)"></div>
<div style="left:640px;top:533.9px;width:860px;height:0.8px;background:rgba(255,255,255,0.8)"></div>
<div style="left:640px;top:555.9px;width:860px;height:0.8px;background:rgba(255,255,255,0.8)"></div>
<div style="left:640px;top:577.9px;width:860px;height:0.8px;background:rgba(255,255,255,0.8)"></div>
<div style="left:640px;top:599.9px;width:860px;height:0.8px;background:rgba(255,255,255,0.8)"></div>
<svg style="left:378.2px;top:80px" width="7.8" height="4.2" viewBox="0 0 7.8 4.2" ><path d="M0.7,0.7 L3.9,3.5 L7.1,0.7" fill="none" stroke="#12344f" stroke-width="1.4" stroke-linecap="round" stroke-linejoin="round"/></svg>
<svg style="left:392.95px;top:78.2px" width="11.8" height="9.8" viewBox="0 0 11.8 9.8" ><path d="M0,1.2 Q0,0 1.2,0 H4.2 L5.6,1.5 H10.6 Q11.8,1.5 11.8,2.7 V8.6 Q11.8,9.8 10.6,9.8 H1.2 Q0,9.8 0,8.6 Z" fill="#80a6f9"/></svg>
<span id="t47" class="t" style="left:413.20px;top:77px;letter-spacing:0.116px;">Statement of profit or loss (Total Cos…</span>
<svg style="left:397.5px;top:101.3px" width="4.4" height="7.8" viewBox="0 0 4.4 7.8" ><path d="M0.7,0.7 L3.7,3.9 L0.7,7.1" fill="none" stroke="#12344f" stroke-width="1.35" stroke-linecap="round" stroke-linejoin="round"/></svg>
<svg style="left:411.2px;top:99.8px" width="10.4" height="10.4" viewBox="0 0 10.4 10.4" ><circle cx="5.2" cy="5.2" r="5.15" fill="#80a6f9"/></svg>
<span id="t48" class="t" style="left:430.80px;top:99px;font-weight:700;-webkit-text-stroke-width:0.2px;letter-spacing:-0.625px;">Revenue</span>
<span id="t49" class="t" style="left:719.83px;top:99px;font-weight:700;-webkit-text-stroke-width:0.2px;letter-spacing:0.076px;">1,227.80</span>
<span id="t50" class="t" style="left:860.55px;top:99px;font-weight:700;-webkit-text-stroke-width:0.2px;letter-spacing:0.076px;">1,187.55</span>
<span id="t51" class="t" style="left:1017.36px;top:99px;font-weight:700;-webkit-text-stroke-width:0.2px;letter-spacing:0.281px;">32.69</span>
<span id="t52" class="t" style="left:1151.26px;top:99px;font-weight:700;-webkit-text-stroke-width:0.2px;letter-spacing:0.254px;">471.59</span>
<span id="t53" class="t" style="left:1291.98px;top:99px;font-weight:700;-webkit-text-stroke-width:0.2px;letter-spacing:0.254px;">842.69</span>
<span id="t54" class="t" style="left:1423.43px;top:99px;font-weight:700;-webkit-text-stroke-width:0.2px;letter-spacing:0.076px;">1,243.47</span>
<svg style="left:397.5px;top:123.3px" width="4.4" height="7.8" viewBox="0 0 4.4 7.8" ><path d="M0.7,0.7 L3.7,3.9 L0.7,7.1" fill="none" stroke="#12344f" stroke-width="1.35" stroke-linecap="round" stroke-linejoin="round"/></svg>
<svg style="left:411.2px;top:121.8px" width="10.4" height="10.4" viewBox="0 0 10.4 10.4" ><circle cx="5.2" cy="5.2" r="5.15" fill="#80a6f9"/></svg>
<span id="t55" class="t" style="left:430.80px;top:121px;letter-spacing:0.035px;">Changes in inventories of finished…</span>
<svg style="left:397.5px;top:145.3px" width="4.4" height="7.8" viewBox="0 0 4.4 7.8" ><path d="M0.7,0.7 L3.7,3.9 L0.7,7.1" fill="none" stroke="#12344f" stroke-width="1.35" stroke-linecap="round" stroke-linejoin="round"/></svg>
<svg style="left:411.2px;top:143.8px" width="10.4" height="10.4" viewBox="0 0 10.4 10.4" ><circle cx="5.2" cy="5.2" r="5.15" fill="#80a6f9"/></svg>
<span id="t56" class="t" style="left:430.80px;top:143px;letter-spacing:0.168px;">Other own work capitalized</span>
<svg style="left:414.2px;top:168px" width="8" height="6.2" viewBox="0 0 8 6.2" ><path d="M0.2,0.6 H7.8 M0.2,5.5 H7.8" stroke="#6d719c" stroke-width="1.15"/></svg>
<span id="t57" class="t" style="left:432.70px;top:165px;letter-spacing:0.210px;">Total operating performance</span>
<span id="t58" class="t" style="left:720.54px;top:165px;letter-spacing:-0.025px;">1,227.80</span>
<span id="t59" class="t" style="left:861.26px;top:165px;letter-spacing:-0.025px;">1,187.55</span>
<span id="t60" class="t" style="left:1017.82px;top:165px;letter-spacing:0.166px;">32.69</span>
<span id="t61" class="t" style="left:1151.80px;top:165px;letter-spacing:0.146px;">471.59</span>
<span id="t62" class="t" style="left:1292.52px;top:165px;letter-spacing:0.146px;">842.69</span>
<span id="t63" class="t" style="left:1424.14px;top:165px;letter-spacing:-0.025px;">1,243.47</span>
<svg style="left:397.5px;top:189.3px" width="4.4" height="7.8" viewBox="0 0 4.4 7.8" ><path d="M0.7,0.7 L3.7,3.9 L0.7,7.1" fill="none" stroke="#12344f" stroke-width="1.35" stroke-linecap="round" stroke-linejoin="round"/></svg>
<svg style="left:411.2px;top:187.8px" width="10.4" height="10.4" viewBox="0 0 10.4 10.4" ><circle cx="5.2" cy="5.2" r="5.15" fill="#80a6f9"/></svg>
<span id="t64" class="t" style="left:430.80px;top:187px;letter-spacing:0.118px;">Other operating income</span>
<svg style="left:397.5px;top:211.3px" width="4.4" height="7.8" viewBox="0 0 4.4 7.8" ><path d="M0.7,0.7 L3.7,3.9 L0.7,7.1" fill="none" stroke="#12344f" stroke-width="1.35" stroke-linecap="round" stroke-linejoin="round"/></svg>
<svg style="left:411.2px;top:209.8px" width="10.4" height="10.4" viewBox="0 0 10.4 10.4" ><circle cx="5.2" cy="5.2" r="5.15" fill="#80a6f9"/></svg>
<span id="t65" class="t" style="left:430.80px;top:209px;letter-spacing:0.228px;">Cost of goods sold</span>
<span id="t66" class="t" style="left:726.33px;top:209px;letter-spacing:0.007px;">-277.99</span>
<span id="t67" class="t" style="left:867.05px;top:209px;letter-spacing:0.007px;">-268.88</span>
<span id="t68" class="t" style="left:1021.25px;top:209px;letter-spacing:-0.022px;">-7.40</span>
<span id="t69" class="t" style="left:1148.49px;top:209px;letter-spacing:0.007px;">-106.77</span>
<span id="t70" class="t" style="left:1289.21px;top:209px;letter-spacing:0.007px;">-190.80</span>
<span id="t71" class="t" style="left:1429.93px;top:209px;letter-spacing:0.007px;">-281.54</span>
<svg style="left:397.5px;top:233.3px" width="4.4" height="7.8" viewBox="0 0 4.4 7.8" ><path d="M0.7,0.7 L3.7,3.9 L0.7,7.1" fill="none" stroke="#12344f" stroke-width="1.35" stroke-linecap="round" stroke-linejoin="round"/></svg>
<svg style="left:412.8px;top:234px" width="8" height="6.2" viewBox="0 0 8 6.2" ><path d="M0.2,0.6 H7.8 M0.2,5.5 H7.8" stroke="#6d719c" stroke-width="1.15"/></svg>
<span id="t72" class="t" style="left:430.80px;top:231px;letter-spacing:0.056px;">Gross profit</span>
<span id="t73" class="t" style="left:729.64px;top:231px;letter-spacing:0.146px;">949.81</span>
<span id="t74" class="t" style="left:870.36px;top:231px;letter-spacing:0.146px;">918.67</span>
<span id="t75" class="t" style="left:1017.82px;top:231px;letter-spacing:0.166px;">25.29</span>
<span id="t76" class="t" style="left:1151.80px;top:231px;letter-spacing:0.146px;">364.82</span>
<span id="t77" class="t" style="left:1292.52px;top:231px;letter-spacing:0.146px;">651.89</span>
<span id="t78" class="t" style="left:1433.24px;top:231px;letter-spacing:0.146px;">961.93</span>
<svg style="left:397.5px;top:255.3px" width="4.4" height="7.8" viewBox="0 0 4.4 7.8" ><path d="M0.7,0.7 L3.7,3.9 L0.7,7.1" fill="none" stroke="#12344f" stroke-width="1.35" stroke-linecap="round" stroke-linejoin="round"/></svg>
<svg style="left:411.2px;top:253.8px" width="10.4" height="10.4" viewBox="0 0 10.4 10.4" ><circle cx="5.2" cy="5.2" r="5.15" fill="#80a6f9"/></svg>
<span id="t79" class="t" style="left:430.80px;top:253px;letter-spacing:0.027px;">Personnel expenses</span>
<span id="t80" class="t" style="left:726.33px;top:253px;letter-spacing:0.007px;">-419.30</span>
<span id="t81" class="t" style="left:867.05px;top:253px;letter-spacing:0.007px;">-405.56</span>
<span id="t82" class="t" style="left:1014.51px;top:253px;letter-spacing:0.174px;">-11.17</span>
<span id="t83" class="t" style="left:1148.49px;top:253px;letter-spacing:0.007px;">-161.05</span>
<span id="t84" class="t" style="left:1289.21px;top:253px;letter-spacing:0.007px;">-287.78</span>
<span id="t85" class="t" style="left:1429.93px;top:253px;letter-spacing:0.007px;">-424.66</span>
<svg style="left:397.5px;top:277.3px" width="4.4" height="7.8" viewBox="0 0 4.4 7.8" ><path d="M0.7,0.7 L3.7,3.9 L0.7,7.1" fill="none" stroke="#12344f" stroke-width="1.35" stroke-linecap="round" stroke-linejoin="round"/></svg>
<svg style="left:411.2px;top:275.8px" width="10.4" height="10.4" viewBox="0 0 10.4 10.4" ><circle cx="5.2" cy="5.2" r="5.15" fill="#80a6f9"/></svg>
<span id="t86" class="t" style="left:430.80px;top:275px;letter-spacing:0.213px;">Depreciation and amortization</span>
<svg style="left:397.5px;top:299.3px" width="4.4" height="7.8" viewBox="0 0 4.4 7.8" ><path d="M0.7,0.7 L3.7,3.9 L0.7,7.1" fill="none" stroke="#12344f" stroke-width="1.35" stroke-linecap="round" stroke-linejoin="round"/></svg>
<svg style="left:411.2px;top:297.8px" width="10.4" height="10.4" viewBox="0 0 10.4 10.4" ><circle cx="5.2" cy="5.2" r="5.15" fill="#80a6f9"/></svg>
<span id="t87" class="t" style="left:430.80px;top:297px;letter-spacing:0.061px;">Other operating expenses</span>
<svg style="left:414.2px;top:322px" width="8" height="6.2" viewBox="0 0 8 6.2" ><path d="M0.2,0.6 H7.8 M0.2,5.5 H7.8" stroke="#6d719c" stroke-width="1.15"/></svg>
<span id="t88" class="t" style="left:432.70px;top:319px;letter-spacing:0.010px;">Operating result</span>
<span id="t89" class="t" style="left:729.64px;top:319px;letter-spacing:0.146px;">530.51</span>
<span id="t90" class="t" style="left:870.36px;top:319px;letter-spacing:0.324px;">513.11</span>
<span id="t91" class="t" style="left:1017.82px;top:319px;letter-spacing:0.166px;">14.12</span>
<span id="t92" class="t" style="left:1151.80px;top:319px;letter-spacing:0.146px;">203.77</span>
<span id="t93" class="t" style="left:1292.52px;top:319px;letter-spacing:0.324px;">364.11</span>
<span id="t94" class="t" style="left:1433.24px;top:319px;letter-spacing:0.146px;">537.27</span>
<svg style="left:412.1px;top:342.5px" width="12.2" height="8.8" viewBox="0 0 12.2 8.8" ><path d="M0.3,3.4 L1.6,3 L3.2,8.2 L5,0.5 H12" fill="none" stroke="#6d719c" stroke-width="1.1" stroke-linejoin="round"/><path d="M6.3,3 L11,8 M11,3 L6.3,8" stroke="#6d719c" stroke-width="1.2"/></svg>
<span id="t95" class="t" style="left:432.70px;top:341px;letter-spacing:-0.151px;">% of revenues</span>
<span id="t96" class="t" style="left:757.40px;top:341.5px;font-size:11px;letter-spacing:-0.800px;">%</span>
<span id="t97" class="t" style="left:723.38px;top:341px;letter-spacing:0.041px;">43.21</span>
<span id="t98" class="t" style="left:898.12px;top:341.5px;font-size:11px;letter-spacing:-0.800px;">%</span>
<span id="t99" class="t" style="left:864.10px;top:341px;letter-spacing:0.041px;">43.21</span>
<span id="t100" class="t" style="left:1038.84px;top:341.5px;font-size:11px;letter-spacing:-0.800px;">%</span>
<span id="t101" class="t" style="left:1004.82px;top:341px;letter-spacing:0.041px;">43.19</span>
<span id="t102" class="t" style="left:1179.56px;top:341.5px;font-size:11px;letter-spacing:-0.800px;">%</span>
<span id="t103" class="t" style="left:1145.54px;top:341px;letter-spacing:0.041px;">43.21</span>
<span id="t104" class="t" style="left:1320.28px;top:341.5px;font-size:11px;letter-spacing:-0.800px;">%</span>
<span id="t105" class="t" style="left:1286.26px;top:341px;letter-spacing:0.041px;">43.21</span>
<span id="t106" class="t" style="left:1461.00px;top:341.5px;font-size:11px;letter-spacing:-0.800px;">%</span>
<span id="t107" class="t" style="left:1426.98px;top:341px;letter-spacing:0.041px;">43.21</span>
<svg style="left:397.5px;top:365.3px" width="4.4" height="7.8" viewBox="0 0 4.4 7.8" ><path d="M0.7,0.7 L3.7,3.9 L0.7,7.1" fill="none" stroke="#12344f" stroke-width="1.35" stroke-linecap="round" stroke-linejoin="round"/></svg>
<svg style="left:411.2px;top:363.8px" width="10.4" height="10.4" viewBox="0 0 10.4 10.4" ><circle cx="5.2" cy="5.2" r="5.15" fill="#80a6f9"/></svg>
<span id="t108" class="t" style="left:430.80px;top:363px;letter-spacing:0.076px;">Financial result</span>
<svg style="left:397.5px;top:387.3px" width="4.4" height="7.8" viewBox="0 0 4.4 7.8" ><path d="M0.7,0.7 L3.7,3.9 L0.7,7.1" fill="none" stroke="#12344f" stroke-width="1.35" stroke-linecap="round" stroke-linejoin="round"/></svg>
<svg style="left:411.2px;top:385.8px" width="10.4" height="10.4" viewBox="0 0 10.4 10.4" ><circle cx="5.2" cy="5.2" r="5.15" fill="#80a6f9"/></svg>
<span id="t109" class="t" style="left:430.80px;top:385px;letter-spacing:0.123px;">Taxes on income</span>
<svg style="left:414.2px;top:410px" width="8" height="6.2" viewBox="0 0 8 6.2" ><path d="M0.2,0.6 H7.8 M0.2,5.5 H7.8" stroke="#6d719c" stroke-width="1.15"/></svg>
<span id="t110" class="t" style="left:432.70px;top:407px;letter-spacing:0.187px;">Profit after tax</span>
<span id="t111" class="t" style="left:729.64px;top:407px;letter-spacing:0.146px;">530.51</span>
<span id="t112" class="t" style="left:870.36px;top:407px;letter-spacing:0.324px;">513.11</span>
<span id="t113" class="t" style="left:1017.82px;top:407px;letter-spacing:0.166px;">14.12</span>
<span id="t114" class="t" style="left:1151.80px;top:407px;letter-spacing:0.146px;">203.77</span>
<span id="t115" class="t" style="left:1292.52px;top:407px;letter-spacing:0.324px;">364.11</span>
<span id="t116" class="t" style="left:1433.24px;top:407px;letter-spacing:0.146px;">537.27</span>
<svg style="left:397.5px;top:431.3px" width="4.4" height="7.8" viewBox="0 0 4.4 7.8" ><path d="M0.7,0.7 L3.7,3.9 L0.7,7.1" fill="none" stroke="#12344f" stroke-width="1.35" stroke-linecap="round" stroke-linejoin="round"/></svg>
<svg style="left:411.2px;top:429.8px" width="10.4" height="10.4" viewBox="0 0 10.4 10.4" ><circle cx="5.2" cy="5.2" r="5.15" fill="#80a6f9"/></svg>
<span id="t117" class="t" style="left:430.80px;top:429px;letter-spacing:-0.013px;">Other taxes</span>
<svg style="left:397.5px;top:453.3px" width="4.4" height="7.8" viewBox="0 0 4.4 7.8" ><path d="M0.7,0.7 L3.7,3.9 L0.7,7.1" fill="none" stroke="#12344f" stroke-width="1.35" stroke-linecap="round" stroke-linejoin="round"/></svg>
<svg style="left:411.2px;top:451.8px" width="10.4" height="10.4" viewBox="0 0 10.4 10.4" ><circle cx="5.2" cy="5.2" r="5.15" fill="#80a6f9"/></svg>
<span id="t118" class="t" style="left:430.80px;top:451px;letter-spacing:0.230px;">Minority interests</span>
<svg style="left:414.2px;top:476px" width="8" height="6.2" viewBox="0 0 8 6.2" ><path d="M0.2,0.6 H7.8 M0.2,5.5 H7.8" stroke="#6d719c" stroke-width="1.15"/></svg>
<span id="t119" class="t" style="left:432.70px;top:473px;letter-spacing:0.106px;">Consolidated result</span>
<span id="t120" class="t" style="left:729.64px;top:473px;letter-spacing:0.146px;">530.51</span>
<span id="t121" class="t" style="left:870.36px;top:473px;letter-spacing:0.324px;">513.11</span>
<span id="t122" class="t" style="left:1017.82px;top:473px;letter-spacing:0.166px;">14.12</span>
<span id="t123" class="t" style="left:1151.80px;top:473px;letter-spacing:0.146px;">203.77</span>
<span id="t124" class="t" style="left:1292.52px;top:473px;letter-spacing:0.324px;">364.11</span>
<span id="t125" class="t" style="left:1433.24px;top:473px;letter-spacing:0.146px;">537.27</span>
<svg style="left:412.1px;top:496.5px" width="12.2" height="8.8" viewBox="0 0 12.2 8.8" ><path d="M0.3,3.4 L1.6,3 L3.2,8.2 L5,0.5 H12" fill="none" stroke="#6d719c" stroke-width="1.1" stroke-linejoin="round"/><path d="M6.3,3 L11,8 M11,3 L6.3,8" stroke="#6d719c" stroke-width="1.2"/></svg>
<span id="t126" class="t" style="left:432.70px;top:495px;letter-spacing:-0.151px;">% of revenues</span>
<span id="t127" class="t" style="left:757.40px;top:495.5px;font-size:11px;letter-spacing:-0.800px;">%</span>
<span id="t128" class="t" style="left:723.38px;top:495px;letter-spacing:0.041px;">43.21</span>
<span id="t129" class="t" style="left:898.12px;top:495.5px;font-size:11px;letter-spacing:-0.800px;">%</span>
<span id="t130" class="t" style="left:864.10px;top:495px;letter-spacing:0.041px;">43.21</span>
<span id="t131" class="t" style="left:1038.84px;top:495.5px;font-size:11px;letter-spacing:-0.800px;">%</span>
<span id="t132" class="t" style="left:1004.82px;top:495px;letter-spacing:0.041px;">43.19</span>
<span id="t133" class="t" style="left:1179.56px;top:495.5px;font-size:11px;letter-spacing:-0.800px;">%</span>
<span id="t134" class="t" style="left:1145.54px;top:495px;letter-spacing:0.041px;">43.21</span>
<span id="t135" class="t" style="left:1320.28px;top:495.5px;font-size:11px;letter-spacing:-0.800px;">%</span>
<span id="t136" class="t" style="left:1286.26px;top:495px;letter-spacing:0.041px;">43.21</span>
<span id="t137" class="t" style="left:1461.00px;top:495.5px;font-size:11px;letter-spacing:-0.800px;">%</span>
<span id="t138" class="t" style="left:1426.98px;top:495px;letter-spacing:0.041px;">43.21</span>
<svg style="left:397.5px;top:519.3px" width="4.4" height="7.8" viewBox="0 0 4.4 7.8" ><path d="M0.7,0.7 L3.7,3.9 L0.7,7.1" fill="none" stroke="#12344f" stroke-width="1.35" stroke-linecap="round" stroke-linejoin="round"/></svg>
<svg style="left:410.4px;top:518.5px" width="12.2" height="8.8" viewBox="0 0 12.2 8.8" ><path d="M0.3,3.4 L1.6,3 L3.2,8.2 L5,0.5 H12" fill="none" stroke="#6d719c" stroke-width="1.1" stroke-linejoin="round"/><path d="M6.3,3 L11,8 M11,3 L6.3,8" stroke="#6d719c" stroke-width="1.2"/></svg>
<span id="t139" class="t" style="left:430.80px;top:517px;letter-spacing:0.144px;">Carry-forward</span>
<span id="t140" class="t" style="left:684.48px;top:517px;letter-spacing:0.005px;">166,950,736.11</span>
<span id="t141" class="t" style="left:825.20px;top:517px;letter-spacing:-0.063px;">166,951,266.62</span>
<span id="t142" class="t" style="left:965.92px;top:517px;letter-spacing:-0.063px;">166,951,779.73</span>
<span id="t143" class="t" style="left:1106.64px;top:517px;letter-spacing:-0.063px;">166,951,793.85</span>
<span id="t144" class="t" style="left:1247.36px;top:517px;letter-spacing:-0.063px;">166,951,997.62</span>
<span id="t145" class="t" style="left:1388.08px;top:517px;letter-spacing:-0.063px;">166,952,361.73</span>
<svg style="left:397.5px;top:541.3px" width="4.4" height="7.8" viewBox="0 0 4.4 7.8" ><path d="M0.7,0.7 L3.7,3.9 L0.7,7.1" fill="none" stroke="#12344f" stroke-width="1.35" stroke-linecap="round" stroke-linejoin="round"/></svg>
<svg style="left:411.2px;top:539.8px" width="10.4" height="10.4" viewBox="0 0 10.4 10.4" ><circle cx="5.2" cy="5.2" r="5.15" fill="#80a6f9"/></svg>
<span id="t146" class="t" style="left:430.80px;top:539px;letter-spacing:0.142px;">Allocation to reserves</span>
<svg style="left:413px;top:561.8px" width="10.4" height="10.4" viewBox="0 0 10.4 10.4" ><circle cx="5.2" cy="5.2" r="5.15" fill="#80a6f9"/></svg>
<span id="t147" class="t" style="left:432.70px;top:561px;letter-spacing:0.133px;">Withdrawal from reserves</span>
<svg style="left:397.5px;top:585.3px" width="4.4" height="7.8" viewBox="0 0 4.4 7.8" ><path d="M0.7,0.7 L3.7,3.9 L0.7,7.1" fill="none" stroke="#12344f" stroke-width="1.35" stroke-linecap="round" stroke-linejoin="round"/></svg>
<svg style="left:411.2px;top:583.8px" width="10.4" height="10.4" viewBox="0 0 10.4 10.4" ><circle cx="5.2" cy="5.2" r="5.15" fill="#80a6f9"/></svg>
<span id="t148" class="t" style="left:430.80px;top:583px;letter-spacing:0.201px;">Dividend distribution</span>
<svg style="left:412.1px;top:606.5px" width="12.2" height="8.8" viewBox="0 0 12.2 8.8" ><path d="M0.3,3.4 L1.6,3 L3.2,8.2 L5,0.5 H12" fill="none" stroke="#6d719c" stroke-width="1.1" stroke-linejoin="round"/><path d="M6.3,3 L11,8 M11,3 L6.3,8" stroke="#6d719c" stroke-width="1.2"/></svg>
<span id="t149" class="t" style="left:432.70px;top:605px;letter-spacing:0.134px;">Net profit (balance sheet)</span>
<span id="t150" class="t" style="left:684.48px;top:605px;letter-spacing:-0.063px;">166,951,266.62</span>
<span id="t151" class="t" style="left:825.20px;top:605px;letter-spacing:-0.063px;">166,951,779.73</span>
<span id="t152" class="t" style="left:965.92px;top:605px;letter-spacing:-0.063px;">166,951,793.85</span>
<span id="t153" class="t" style="left:1106.64px;top:605px;letter-spacing:-0.063px;">166,951,997.62</span>
<span id="t154" class="t" style="left:1247.36px;top:605px;letter-spacing:-0.063px;">166,952,361.73</span>
<span id="t155" class="t" style="left:1388.08px;top:605px;letter-spacing:-0.063px;">166,952,899.00</span>
</main>
<svg style="left:0px;top:0px" width="9" height="9" viewBox="0 0 9 9" ><path d="M0,0 H8.4 A8.4,8.4 0 0 0 0,8.4 Z" fill="#8d9ca7"/></svg>
<svg style="left:0px;top:834px" width="9" height="9" viewBox="0 0 9 9" ><path d="M0,9 H8.4 A8.4,8.4 0 0 1 0,0.6 Z" fill="#8d9ca7"/></svg>
<svg style="left:1491px;top:0px" width="9" height="9" viewBox="0 0 9 9" ><path d="M9,0 H0.6 A8.4,8.4 0 0 1 9,8.4 Z" fill="#8d9ca7"/></svg>
</div></body></html>
